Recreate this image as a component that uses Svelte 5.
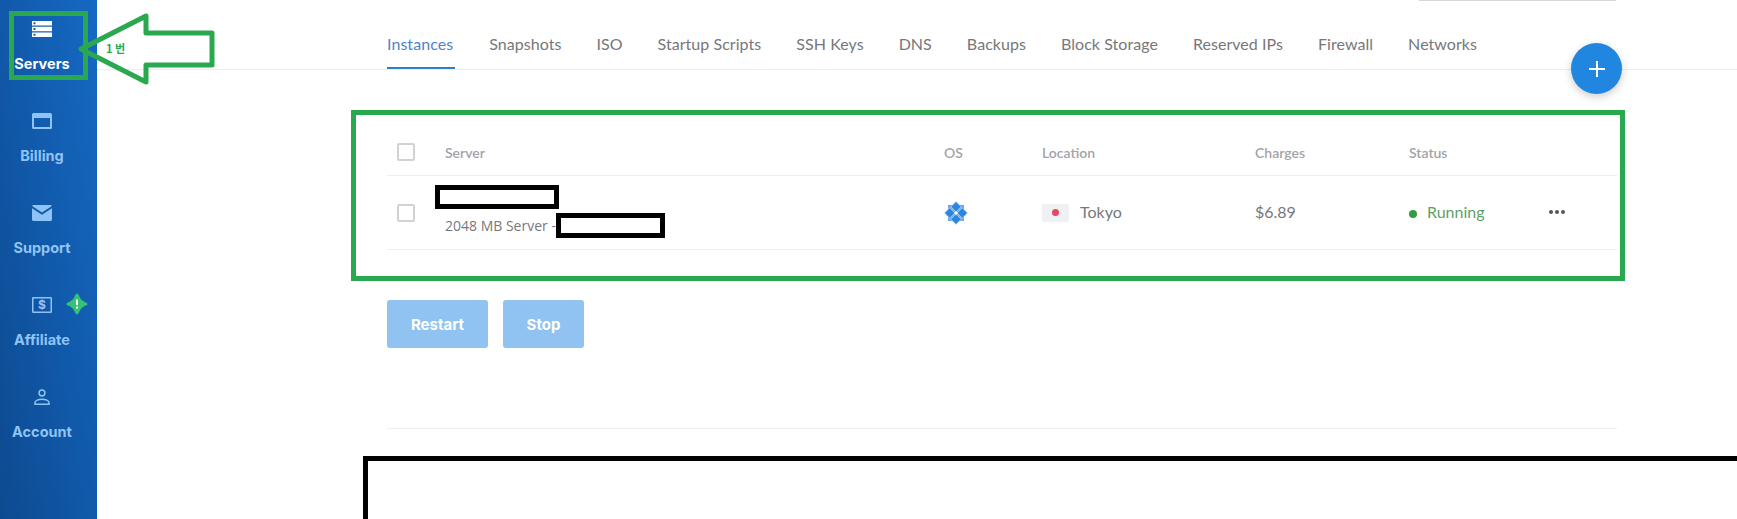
<script>
	const tabs = ['Instances', 'Snapshots', 'ISO', 'Startup Scripts', 'SSH Keys', 'DNS', 'Backups', 'Block Storage', 'Reserved IPs', 'Firewall', 'Networks'];
	const nav = [
		{ label: 'Servers', icon: 'servers', active: true },
		{ label: 'Billing', icon: 'billing' },
		{ label: 'Support', icon: 'support' },
		{ label: 'Affiliate', icon: 'affiliate', badge: true },
		{ label: 'Account', icon: 'account' }
	];
</script>

<div class="page">
	<aside class="sidebar">
		{#each nav as item}
			<a class="nav-item" class:active={item.active} href="#{item.icon}">
				<svg class="nav-icon" viewBox="0 0 20 16" width="20" height="16">
					{#if item.icon === 'servers'}
						<path fill="currentColor" fill-rule="evenodd" d="M0 0h20v4.400H0zM1.500 1.200v2h2v-2zM0 5.800h20v4.400H0zM1.500 7v2h2V7zM0 11.600h20V16H0zM1.500 12.800v2h2v-2z" />
					{:else if item.icon === 'billing'}
						<path fill="currentColor" fill-rule="evenodd" d="M1.500 0h17A1.500 1.500 0 0 1 20 1.500v13a1.500 1.500 0 0 1-1.500 1.500h-17A1.500 1.500 0 0 1 0 14.500v-13A1.500 1.500 0 0 1 1.500 0zM2 5v9h16V5z" />
					{:else if item.icon === 'support'}
						<path fill="currentColor" d="M1.500 0h17c.7 0 1.200.4 1.400 1L10 7.500.1 1C.3.400.8 0 1.500 0zM0 3.200l10 6.500 10-6.500v11.300c0 .8-.7 1.500-1.500 1.500h-17C.7 16 0 15.300 0 14.500z" />
					{:else if item.icon === 'affiliate'}
						<rect x="0.750" y="0.750" width="18.500" height="14.500" rx="0.500" fill="none" stroke="currentColor" stroke-width="1.500" />
						<text x="10" y="12.300" text-anchor="middle" class="dollar">$</text>
					{:else}
						<circle cx="10" cy="4" r="2.900" fill="none" stroke="currentColor" stroke-width="1.500" />
						<path fill="none" stroke="currentColor" stroke-width="1.500" d="M3 15.200h14v-1.600c0-2-3.500-3.400-7-3.400s-7 1.400-7 3.400z" />
					{/if}
				</svg>
				<span class="nav-label">{item.label}</span>
				{#if item.badge}
					<svg class="badge" viewBox="0 0 22 22" width="22" height="22">
						<path fill="#36c275" d="M11 .5C12.500 .5 13 3 14.500 5.500 16 8 18.500 8.500 20.500 9.700 22 10.500 22 11.500 20.500 12.300 18.500 13.500 16 14 14.500 16.500 13 19 12.500 21.500 11 21.500 9.500 21.500 9 19 7.500 16.500 6 14 3.500 13.500 1.500 12.300 0 11.500 0 10.500 1.500 9.700 3.500 8.500 6 8 7.500 5.500 9 3 9.500 .5 11 .5z" />
						<path fill="#fff" d="M10 6.500h2v5.500h-2zM10 13.500h2v2h-2z" />
					</svg>
				{/if}
			</a>
		{/each}
	</aside>

	<main class="main">
		<div class="search-edge"></div>
		<nav class="tabs">
			{#each tabs as tab, i}
				<a class="tab" class:current={i === 0} href="#{tab}">{tab}</a>
			{/each}
			<button class="fab" aria-label="Add">
				<svg viewBox="0 0 16 16" width="16" height="16"><path fill="#fff" d="M7 0h2v7h7v2H9v7H7V9H0V7h7z" /></svg>
			</button>
		</nav>

		<section class="highlight">
			<div class="row head">
				<span class="check"></span>
				<span>Server</span>
				<span>OS</span>
				<span>Location</span>
				<span>Charges</span>
				<span>Status</span>
				<span></span>
			</div>
			<div class="row body">
				<span class="check"></span>
				<div class="server">
					<span class="redact name"></span>
					<div class="plan">
						<span>2048 MB Server -</span>
						<span class="redact ip"></span>
					</div>
				</div>
				<svg class="os" viewBox="0 0 24 24" width="24" height="24">
					<rect x="4" y="4" width="16" height="16" fill="#6ea6ea" />
					<g fill="#2a86e2" stroke="#cfe2f8" stroke-width="0.700">
						<path d="M12 .5l5.200 5.200L12 10.900 6.800 5.700zM12 13.100l5.200 5.200L12 23.500l-5.200-5.200zM.5 12l5.200-5.200L10.900 12l-5.200 5.200zM13.100 12l5.200-5.200L23.500 12l-5.200 5.200z" />
					</g>
					<circle cx="12" cy="12" r="1.600" fill="#fff" />
				</svg>
				<div class="location">
					<span class="flag"><i></i></span>
					<span class="city">Tokyo</span>
				</div>
				<span class="charges">$6.89</span>
				<div class="status"><i></i><span>Running</span></div>
				<div class="more"><i></i><i></i><i></i></div>
			</div>
		</section>

		<div class="actions">
			<button class="btn restart">Restart</button>
			<button class="btn stop">Stop</button>
		</div>

		<hr class="divider" />
		<div class="redact panel"></div>
	</main>

	<!-- annotation drawn over the screenshot -->
	<div class="mark-box"></div>
	<svg class="mark-arrow" viewBox="0 0 220 90" width="220" height="90">
		<path fill="none" stroke="#2aa84f" stroke-width="5" stroke-linejoin="round" d="M81 49 146 16V33H212V65H146V82z" />
		<text x="106" y="53" class="mark-text">1 번</text>
	</svg>
</div>

<style>
	:global(body) {
		margin: 0;
		background: #fff;
		font-family: Lato, 'Open Sans', sans-serif;
	}

	.page {
		position: relative;
		display: flex;
		height: 519px;
		overflow: hidden;
	}

	.sidebar {
		flex: 0 0 97px;
		display: flex;
		flex-direction: column;
		padding: 21px 13px 0 0;
		box-sizing: border-box;
		background: linear-gradient(80deg, #0d4a90 0%, #1569c4 100%);
	}

	.nav-item {
		position: relative;
		display: flex;
		flex-direction: column;
		align-items: center;
		height: 92px;
		color: #8fc3f5;
		text-decoration: none;
		font-family: Inter, sans-serif;
		font-weight: 700;
		font-size: 14.5px;
	}

	.nav-item.active {
		color: #fff;
	}

	.nav-label {
		margin-top: 18px;
		line-height: 18px;
	}

	.dollar {
		fill: currentColor;
		font-family: Inter, sans-serif;
		font-weight: 700;
		font-size: 12px;
	}

	.badge {
		position: absolute;
		left: 66px;
		top: -4px;
	}

	.main {
		position: relative;
		flex: 1;
		min-width: 0;
	}

	.search-edge {
		position: absolute;
		left: 1322px;
		top: 0;
		width: 197px;
		height: 1px;
		background: #d8d8d8;
	}

	.tabs {
		position: relative;
		display: flex;
		align-items: flex-start;
		gap: 35px;
		height: 70px;
		padding: 33px 0 0 290px;
		box-sizing: border-box;
		border-bottom: 1px solid #eceef1;
	}

	.tab {
		height: 36px;
		box-sizing: border-box;
		color: #77777b;
		text-decoration: none;
		font-size: 16px;
		line-height: 22px;
		letter-spacing: 0.05px;
		white-space: nowrap;
	}

	.tab.current {
		color: #4f83cc;
		padding-right: 2px;
		margin-right: -1px;
		border-bottom: 2px solid #2f7fc4;
	}

	.fab {
		position: absolute;
		left: 1474px;
		top: 43px;
		display: flex;
		align-items: center;
		justify-content: center;
		width: 51px;
		height: 51px;
		padding: 0;
		border: 0;
		border-radius: 50%;
		background: #2086e0;
		box-shadow: 0 3px 8px rgba(0, 0, 0, 0.2);
	}

	.highlight {
		width: 1274px;
		height: 171px;
		box-sizing: border-box;
		margin: 40px 0 0 254px;
		padding: 0 3px 0 31px;
		border: 5px solid #2aa84f;
	}

	.row {
		display: grid;
		grid-template-columns: 58px 499px 98px 213px 154px 140px 1fr;
		align-items: center;
		border-bottom: 1px solid #eceef1;
		box-sizing: border-box;
	}

	.head {
		height: 61px;
		padding-top: 14px;
		color: #a3a3a8;
		font-size: 14px;
		font-weight: 600;
	}

	.body {
		height: 74px;
		color: #77777b;
		font-size: 16px;
	}

	.check {
		display: block;
		width: 18px;
		height: 18px;
		margin-left: 10px;
		box-sizing: border-box;
		border: 2px solid #cfd3d6;
		border-radius: 2px;
	}

	.server {
		position: relative;
		align-self: stretch;
	}

	.redact {
		display: block;
		box-sizing: border-box;
		border: 5px solid #000;
		background: #fff;
	}

	.name {
		width: 124px;
		height: 24px;
		margin: 9px 0 0 -10px;
	}

	.plan {
		display: flex;
		align-items: center;
		margin-top: 4px;
		font-family: 'Open Sans', sans-serif;
		font-size: 14px;
		white-space: nowrap;
	}

	.ip {
		width: 109px;
		height: 25px;
		margin-left: 0;
	}

	.location {
		display: flex;
		align-items: center;
		gap: 11px;
	}

	.city {
		padding-bottom: 3px;
	}

	.flag {
		display: flex;
		align-items: center;
		justify-content: center;
		width: 27px;
		height: 18px;
		border-radius: 2px;
		background: #eff0f3;
	}

	.flag i {
		width: 7px;
		height: 7px;
		border-radius: 50%;
		background: #e8475f;
	}

	.charges {
		margin-bottom: 3px;
		font-size: 16px;
	}

	.status {
		display: flex;
		align-items: center;
		gap: 10px;
		margin-top: 3px;
		color: #5f9f68;
	}

	.status span {
		padding-bottom: 6px;
	}

	.status i {
		width: 8px;
		height: 8px;
		border-radius: 50%;
		background: #359a45;
	}

	.more {
		display: flex;
		gap: 2px;
		margin: -2px 0 0 0;
	}

	.more i {
		width: 4px;
		height: 4px;
		border-radius: 50%;
		background: #55555c;
	}

	.actions {
		display: flex;
		gap: 15px;
		margin: 19px 0 0 290px;
	}

	.btn {
		height: 48px;
		padding: 0;
		border: 0;
		border-radius: 3px;
		background: #90c2f2;
		color: #fff;
		font-family: Inter, sans-serif;
		font-weight: 700;
		font-size: 15px;
	}

	.restart {
		width: 101px;
	}

	.stop {
		width: 81px;
	}

	.divider {
		width: 1230px;
		height: 1px;
		margin: 80px 0 0 290px;
		border: 0;
		background: #eceef1;
	}

	.panel {
		width: 1500px;
		height: 200px;
		margin: 27px 0 0 266px;
	}

	.mark-box {
		position: absolute;
		left: 9px;
		top: 11px;
		width: 79px;
		height: 69px;
		box-sizing: border-box;
		border: 5px solid #2aa84f;
	}

	.mark-arrow {
		position: absolute;
		left: 0;
		top: 0;
	}

	.mark-text {
		fill: #2aa84f;
		font-family: 'Noto Sans CJK KR', sans-serif;
		font-weight: 700;
		font-size: 11px;
	}
</style>
